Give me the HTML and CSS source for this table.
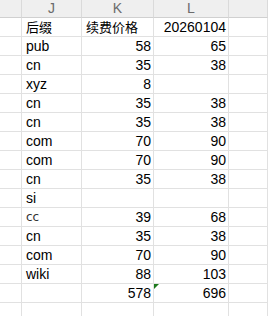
FILE: index.html
```html
<!DOCTYPE html>
<html>
<head>
<meta charset="utf-8">
<link rel="stylesheet" href="styles.css">
</head>
<body>
<div class="sheet">
  <div class="hd"></div><div class="hd">J</div><div class="hd">K</div><div class="hd">L</div><div class="hd"></div>

  <div class="c"></div><div class="c t cjk">后缀</div><div class="c t cjk">续费价格</div><div class="c n">20260104</div><div class="c"></div>
  <div class="c"></div><div class="c t">pub</div><div class="c n">58</div><div class="c n">65</div><div class="c"></div>
  <div class="c"></div><div class="c t">cn</div><div class="c n">35</div><div class="c n">38</div><div class="c"></div>
  <div class="c"></div><div class="c t">xyz</div><div class="c n">8</div><div class="c n"></div><div class="c"></div>
  <div class="c"></div><div class="c t">cn</div><div class="c n">35</div><div class="c n">38</div><div class="c"></div>
  <div class="c"></div><div class="c t">cn</div><div class="c n">35</div><div class="c n">38</div><div class="c"></div>
  <div class="c"></div><div class="c t">com</div><div class="c n">70</div><div class="c n">90</div><div class="c"></div>
  <div class="c"></div><div class="c t">com</div><div class="c n">70</div><div class="c n">90</div><div class="c"></div>
  <div class="c"></div><div class="c t">cn</div><div class="c n">35</div><div class="c n">38</div><div class="c"></div>
  <div class="c"></div><div class="c t">si</div><div class="c n"></div><div class="c n"></div><div class="c"></div>
  <div class="c"></div><div class="c t alt">cc</div><div class="c n">39</div><div class="c n">68</div><div class="c"></div>
  <div class="c"></div><div class="c t">cn</div><div class="c n">35</div><div class="c n">38</div><div class="c"></div>
  <div class="c"></div><div class="c t">com</div><div class="c n">70</div><div class="c n">90</div><div class="c"></div>
  <div class="c"></div><div class="c t">wiki</div><div class="c n">88</div><div class="c n">103</div><div class="c"></div>
  <div class="c"></div><div class="c t"></div><div class="c n">578</div><div class="c n flag">696</div><div class="c"></div>
  <div class="c"></div><div class="c t"></div><div class="c n"></div><div class="c n"></div><div class="c"></div>
</div>
</body>
</html>
```
FILE: styles.css
```css
html, body {
  margin: 0;
  padding: 0;
  background: #ffffff;
}
.sheet {
  display: grid;
  grid-template-columns: 22px 60px 72px 75px 1fr;
  grid-auto-rows: 19px;
  grid-template-rows: 18px;
  font-family: "Liberation Sans", Arial, sans-serif;
  font-size: 14px;
  color: #000;
  overflow: hidden;
  height: 316px;
}
.hd {
  box-sizing: border-box;
  background: #efefef;
  border-right: 1px solid #dadada;
  border-bottom: 1px solid #d0d0d0;
  color: #6b6b6b;
  font-size: 14px;
  text-align: center;
  line-height: 17px;
}
.c {
  box-sizing: border-box;
  border-right: 1px solid #e1e1e1;
  border-bottom: 1px solid #e1e1e1;
  line-height: 18px;
  white-space: nowrap;
  overflow: visible;
}
.t {
  padding-left: 4px;
  text-align: left;
}
.n {
  padding-right: 2px;
  text-align: right;
}
.cjk {
  font-family: "Noto Sans CJK SC", "Liberation Sans", sans-serif;
  font-size: 13px;
}
.alt {
  font-family: "DejaVu Sans", sans-serif;
  font-size: 12px;
  color: #333;
}
.flag {
  position: relative;
}
.flag::before {
  content: "";
  position: absolute;
  left: 0;
  top: 0;
  border-top: 5px solid #1d7a1d;
  border-right: 5px solid transparent;
}
```
